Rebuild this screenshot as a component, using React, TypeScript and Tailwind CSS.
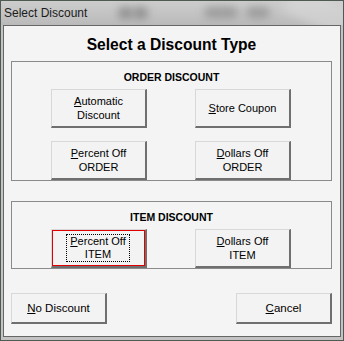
import type { ReactNode } from 'react';

type BtnProps = {
  children: ReactNode;
  h?: string;
  focused?: boolean;
};

const Mn = ({ c }: { c: string }) => <span className="underline underline-offset-[1px]">{c}</span>;

const WinButton = ({ children, h = 'h-[39px]', focused = false }: BtnProps) => (
  <button
    className={`w-[96px] ${h} flex items-center justify-center bg-[#f3f3f3] border-t border-l border-[#d8d8d8] border-r-2 border-b-2 border-r-[#6f6f6f] border-b-[#6f6f6f] text-[11px] leading-[14px] text-black text-center`}
  >
    {focused ? (
      <span className="w-full h-full flex items-center justify-center border border-[#e00000] -mt-[1px] -ml-[1px]">
        <span className="px-[3px] leading-[13px] border border-dotted border-black">{children}</span>
      </span>
    ) : (
      children
    )}
  </button>
);

const GroupBox = ({ title, children }: { title: string; children: ReactNode }) => (
  <div className="w-[321px] border border-[#8a8a8a] pt-[8px]">
    <div className="text-center text-[10.5px] leading-[14px] font-bold text-black">{title}</div>
    <div className="mt-[5px] pl-[39px] grid grid-cols-[96px_96px] gap-x-[48px] gap-y-[13px]">{children}</div>
  </div>
);

const App = () => {
  return (
    <div
      className="w-[344px] h-[341px] bg-[#c3c3c3] border border-[#4f5a52] flex flex-col overflow-hidden"
      style={{ fontFamily: '"Liberation Sans", Arial, sans-serif' }}
    >
      {/* title bar */}
      <div className="relative h-[24px] bg-gradient-to-b from-[#cdcdcd] to-[#bababa] overflow-hidden">
        <div className="absolute left-[117px] top-[6px] w-[15px] h-[12px] rounded-full bg-[#777777] blur-[4px] opacity-70" />
        <div className="absolute left-[132px] top-[6px] w-[15px] h-[12px] rounded-full bg-[#777777] blur-[4px] opacity-70" />
        <div className="absolute left-[203px] top-[6px] w-[34px] h-[11px] rounded-full bg-[#808080] blur-[4px] opacity-60" />
        <div className="absolute left-[245px] top-[6px] w-[24px] h-[11px] rounded-full bg-[#808080] blur-[4px] opacity-60" />
        <div className="absolute left-[285px] top-[-4px] w-[70px] h-[30px] bg-[#dadada] blur-[5px] opacity-60 rotate-[25deg]" />
        <span className="relative block pl-[3px] text-[12px] leading-[24px] text-[#1b1b1b]">Select Discount</span>
      </div>

      {/* dialog body */}
      <div className="mx-[2px] h-[312px] border border-[#666666] bg-[#f4f4f4] flex flex-col pl-[7px]">
        <div className="h-[35px] pt-[10px] pr-[8px] text-center text-[15.6px] leading-[18px] font-bold text-black">
          Select a Discount Type
        </div>

        <div className="h-[132px]">
          <GroupBox title="ORDER DISCOUNT">
            <WinButton>
              <span>
                <Mn c="A" />utomatic
                <br />
                Discount
              </span>
            </WinButton>
            <WinButton>
              <span>
                <Mn c="S" />tore Coupon
              </span>
            </WinButton>
            <WinButton>
              <span>
                <Mn c="P" />ercent Off
                <br />
                ORDER
              </span>
            </WinButton>
            <WinButton>
              <span>
                <Mn c="D" />ollars Off
                <br />
                ORDER
              </span>
            </WinButton>
          </GroupBox>
        </div>

        <div className="mt-[8px] h-[81px]">
          <GroupBox title="ITEM DISCOUNT">
            <WinButton focused>
              <span>
                <Mn c="P" />ercent Off
                <br />
                ITEM
              </span>
            </WinButton>
            <WinButton>
              <span>
                <Mn c="D" />ollars Off
                <br />
                ITEM
              </span>
            </WinButton>
          </GroupBox>
        </div>

        <div className="mt-[11px] w-[321px] flex justify-between">
          <WinButton h="h-[31px]">
            <span className="text-[11.5px]">
              <Mn c="N" />o Discount
            </span>
          </WinButton>
          <WinButton h="h-[31px]">
            <span className="text-[11.5px]">
              <Mn c="C" />ancel
            </span>
          </WinButton>
        </div>
      </div>
    </div>
  );
};

export default App;
